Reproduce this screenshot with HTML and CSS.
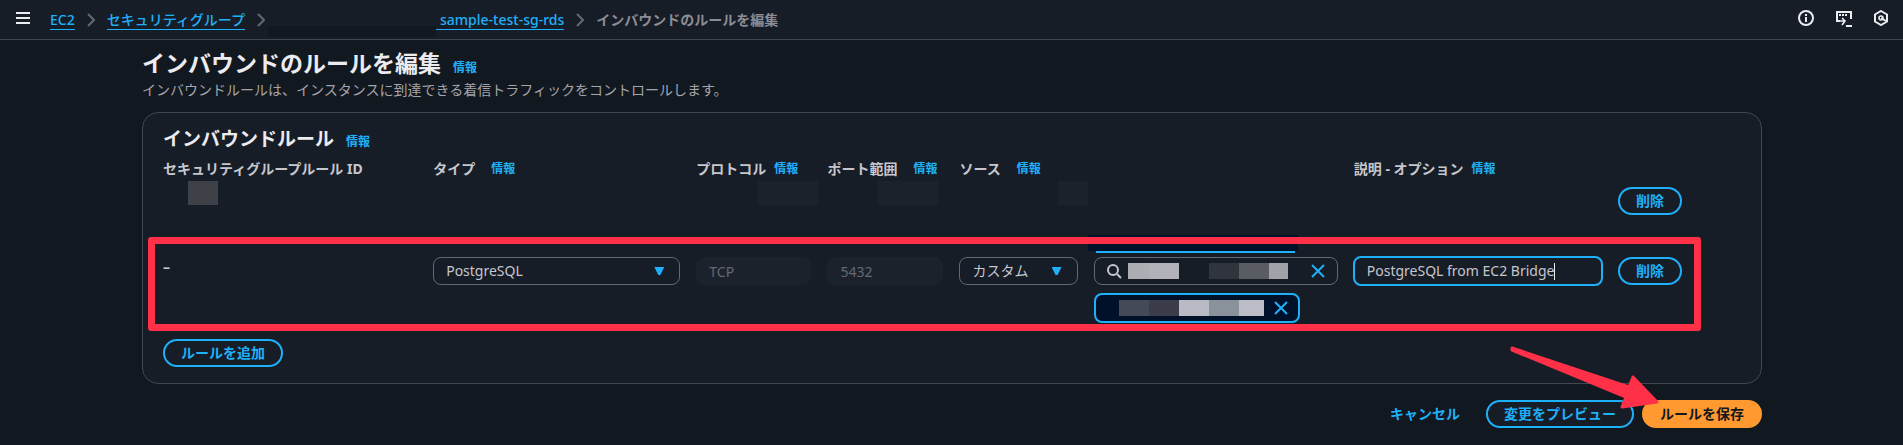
FILE: index.html
```
<!DOCTYPE html>
<html lang="ja">
<head>
  <meta charset="UTF-8">
  <meta name="viewport" content="width=device-width, initial-scale=1.0">
  <title>インバウンドのルールを編集 | EC2</title>
  <link rel="stylesheet" href="styles.css">
</head>
<body>
  <header class="topbar">
    <button class="icon-button" type="button" aria-label="メニュー">
      <svg width="14" height="12" viewBox="0 0 14 12"><path d="M0 1h14M0 6h14M0 11h14" stroke="currentColor" stroke-width="2"/></svg>
    </button>
    <nav class="breadcrumbs" aria-label="パンくずリスト">
      <a href="#">EC2</a>
      <svg class="chevron" width="8" height="14" viewBox="0 0 8 14"><path d="M1 1l6 6-6 6"/></svg>
      <a href="#">セキュリティグループ</a>
      <svg class="chevron" width="8" height="14" viewBox="0 0 8 14"><path d="M1 1l6 6-6 6"/></svg>
      <span class="crumb-mask"></span>
      <a class="crumb-group" href="#">sample-test-sg-rds</a>
      <svg class="chevron" width="8" height="14" viewBox="0 0 8 14"><path d="M1 1l6 6-6 6"/></svg>
      <span class="crumb-current">インバウンドのルールを編集</span>
    </nav>
    <div class="tools">
      <button class="icon-button" type="button" aria-label="ヘルプ">
        <svg width="16" height="16" viewBox="0 0 16 16" fill="none" stroke="currentColor" stroke-width="2"><circle cx="8" cy="8" r="7"/><path d="M8 7v5M8 4v2"/></svg>
      </button>
      <button class="icon-button" type="button" aria-label="CloudShell">
        <svg width="16" height="18" viewBox="0 0 16 18" fill="none" stroke="currentColor" stroke-width="2"><path d="M4 12H1V3h14v7"/><path d="M3 6h2M6 6h2M9 6h2"/><path d="M3 12h6M6 9l3 3-3 4" stroke-width="1.6"/><path d="M10 17h6"/></svg>
      </button>
      <button class="icon-button" type="button" aria-label="アシスタント">
        <svg width="14" height="16" viewBox="0 0 14 16" fill="none" stroke="currentColor" stroke-width="2"><path d="M7 1l6 3.5v7L7 15l-6-3.5v-7z"/><circle cx="7" cy="8" r="2" stroke-width="1.6"/><path d="M7 8l5 3"/></svg>
      </button>
    </div>
  </header>

  <main class="page">
    <h1>インバウンドのルールを編集 <a class="info" href="#">情報</a></h1>
    <p class="lead">インバウンドルールは、インスタンスに到達できる着信トラフィックをコントロールします。</p>

    <form>
      <section class="panel">
        <h2>インバウンドルール <a class="info" href="#">情報</a></h2>

        <div class="rule-grid rule-head">
          <div>セキュリティグループルール ID</div>
          <div class="wide"><label for="type">タイプ</label><a class="info" href="#">情報</a></div>
          <div><label for="protocol">プロトコル</label><a class="info" href="#">情報</a></div>
          <div class="wide"><label for="port">ポート範囲</label><a class="info" href="#">情報</a></div>
          <div class="wide"><label for="source">ソース</label><a class="info" href="#">情報</a></div>
          <div><label for="description">説明 - オプション</label><a class="info" href="#">情報</a></div>
        </div>

        <div class="rule-grid rule-masked">
          <div><span class="mask mask-id"></span></div>
          <div></div>
          <div><span class="mask mask-protocol"></span></div>
          <div><span class="mask mask-port"></span></div>
          <div class="masked-source">
            <span class="mask mask-source"></span>
            <span class="token-end"></span>
          </div>
          <div></div>
          <div class="remove"><button class="button" type="button">削除</button></div>
        </div>

        <div class="rule-grid rule-row">
          <div class="rule-id">–</div>
          <div class="select">
            <select id="type"><option>PostgreSQL</option></select>
          </div>
          <div><input class="field" id="protocol" type="text" value="TCP" disabled></div>
          <div><input class="field" id="port" type="text" value="5432" disabled></div>
          <div class="source">
            <div class="select">
              <select id="source"><option>カスタム</option></select>
            </div>
            <div class="source-values">
              <div class="search">
                <svg width="15" height="15" viewBox="0 0 15 15" fill="none" stroke="currentColor" stroke-width="2"><circle cx="6" cy="6" r="5"/><path d="M10 10l4 4"/></svg>
                <span class="mosaic">
                  <i class="m1"></i><i class="m2"></i><i class="m3"></i><i class="m4"></i><i class="m5"></i><i class="m6"></i>
                </span>
                <input type="text" aria-label="ソースを検索">
                <button class="close" type="button" aria-label="クリア">
                  <svg width="14" height="14" viewBox="0 0 14 14"><path d="M1 1l12 12M13 1L1 13"/></svg>
                </button>
              </div>
              <div class="token">
                <span class="mosaic">
                  <i class="t1"></i><i class="t2"></i><i class="t3"></i><i class="t4"></i><i class="t5"></i>
                </span>
                <button class="close" type="button" aria-label="削除">
                  <svg width="14" height="14" viewBox="0 0 14 14"><path d="M1 1l12 12M13 1L1 13"/></svg>
                </button>
              </div>
            </div>
          </div>
          <div class="description">
            <input id="description" type="text" value="PostgreSQL from EC2 Bridge"><span class="caret"></span>
          </div>
          <div class="remove"><button class="button" type="button">削除</button></div>
          <div class="highlight"></div>
        </div>

        <button class="button" type="button">ルールを追加</button>
      </section>

      <div class="actions">
        <button class="button button-link" type="button">キャンセル</button>
        <button class="button" type="button">変更をプレビュー</button>
        <button class="button button-primary" type="submit">ルールを保存</button>
        <svg class="arrow" width="152" height="66" viewBox="0 0 152 66"><path d="M4 4L121 43L125 33L149 58L114 63L118 53L4 6z"/></svg>
      </div>
    </form>
  </main>
</body>
</html>
```
FILE: styles.css
```
* {
  box-sizing: border-box;
}

body {
  margin: 0;
  background-color: #12181f;
  color: #c6c6cd;
  font-family: "Noto Sans", "Noto Sans CJK JP", sans-serif;
  font-size: 14px;
  line-height: 20px;
}

a {
  color: #1fb0fa;
}

button,
input,
select {
  font: inherit;
  color: inherit;
}

button {
  cursor: pointer;
}

.topbar {
  display: flex;
  align-items: center;
  height: 40px;
  padding: 0 15px 3px 16px;
  background-color: #161d26;
  border-bottom: 1px solid #424650;
}

.icon-button {
  display: flex;
  padding: 0;
  border: none;
  background: none;
  color: #ebebf0;
}

.breadcrumbs {
  display: flex;
  align-items: center;
  gap: 12px;
  margin-left: 20px;
  padding-top: 3px;
}

.breadcrumbs a {
  font-weight: 500;
  line-height: 19px;
  text-decoration: none;
  border-bottom: 1px solid #1fb0fa;
}

.chevron {
  fill: none;
  stroke: #656871;
  stroke-width: 2;
}

.crumb-mask {
  align-self: flex-end;
  width: 168px;
  height: 11px;
  margin: 0 -12px -7px -9px;
  background-color: #12181f;
}

.breadcrumbs .crumb-group {
  padding-left: 4px;
}

.crumb-current {
  color: #8c8c94;
  font-weight: 700;
}

.tools {
  display: flex;
  align-items: center;
  gap: 22px;
  margin-left: auto;
}

.page {
  padding: 8px 141px 16px 142px;
}

h1,
h2 {
  display: flex;
  align-items: baseline;
  gap: 12px;
  margin: 0;
  color: #ebebf0;
  font-weight: 700;
}

h1 {
  font-size: 23px;
  line-height: 30px;
}

h2 {
  font-size: 19px;
  line-height: 24px;
}

.info {
  font-size: 12px;
  font-weight: 700;
  line-height: 16px;
  text-decoration: none;
}

.lead {
  margin: 2px 0 12px;
  color: #a4a4ad;
}

.panel {
  padding: 14px 22px 16px 20px;
  background-color: #161d26;
  border: 1px solid #424650;
  border-radius: 16px;
}

.rule-grid {
  display: grid;
  grid-template-columns:
    minmax(0, 254fr) minmax(0, 247fr) minmax(0, 115fr) minmax(0, 116fr)
    minmax(0, 378fr) minmax(0, 248fr) minmax(0, 121fr);
  column-gap: 16px;
}

.rule-head {
  margin-top: 8px;
  font-weight: 700;
  white-space: nowrap;
}

.rule-head div {
  display: flex;
  align-items: center;
  gap: 8px;
}

.rule-head .wide {
  gap: 16px;
}

.rule-masked {
  height: 74px;
  padding-top: 2px;
}

.mask {
  display: block;
  height: 24px;
  background-color: #1b222b;
}

.mask-id {
  width: 30px;
  margin-left: 25px;
  background-color: #3e4148;
}

.mask-protocol {
  width: 60px;
  margin-left: 62px;
}

.mask-port {
  width: 60px;
  margin-left: 51px;
}

.mask-source {
  width: 30px;
  margin-left: 99px;
}

.masked-source {
  display: flex;
  flex-direction: column;
  justify-content: space-between;
}

/* lower edge of a token scrolled out above the search box */
.token-end {
  width: 210px;
  height: 18px;
  margin-left: 129px;
  padding: 16px 3px 0 8px;
  background: linear-gradient(#001129, #001129) top / 100% 16px no-repeat;
}

.token-end::after {
  content: "";
  display: block;
  height: 2px;
  background-color: #1fb0fa;
}

.rule-masked .remove {
  padding-top: 6px;
}

.rule-row {
  position: relative;
  align-items: start;
  padding-top: 4px;
  margin-bottom: 16px;
}

.rule-id {
  font-weight: 700;
}

.highlight {
  position: absolute;
  top: -16px;
  right: 38px;
  bottom: -8px;
  left: -15px;
  border: 7px solid #ff3048;
  border-radius: 3px;
  pointer-events: none;
}

.select {
  display: grid;
  align-items: center;
}

.select select,
.select::after {
  grid-area: 1 / 1;
}

.select::after {
  content: "";
  justify-self: end;
  width: 10px;
  height: 8px;
  margin-right: 16px;
  background-color: #1fb0fa;
  clip-path: polygon(0 0, 100% 0, 60% 100%, 40% 100%);
  pointer-events: none;
}

.select select,
.field {
  width: 100%;
  height: 28px;
  padding: 0 12px;
  border: 1px solid #656871;
  border-radius: 8px;
  background-color: #161d26;
  appearance: none;
}

.field:disabled {
  border-color: #1b222b;
  background-color: #1b222b;
  color: #656871;
}

.source {
  display: grid;
  grid-template-columns: minmax(0, 118fr) minmax(0, 244fr);
  align-items: start;
  gap: 16px;
}

.search {
  display: flex;
  align-items: center;
  height: 28px;
  padding: 0 12px;
  border: 1px solid #656871;
  border-radius: 8px;
}

.search .mosaic {
  margin-left: 6px;
}

.search input {
  flex: 1;
  width: 0;
  min-width: 0;
  padding: 0;
  border: none;
  background: none;
}

.mosaic {
  display: flex;
  height: 16px;
}

.mosaic i {
  width: 30px;
}

.mosaic .m1 { width: 21px; background-color: #adaeb4; }
.mosaic .m2 { background-color: #b2b3ba; }
.mosaic .m4 { background-color: #30353d; }
.mosaic .m5 { background-color: #5a5c64; }
.mosaic .m6 { width: 19px; background-color: #a1a1aa; }
.mosaic .t1 { background-color: #444a57; }
.mosaic .t2 { background-color: #3a3d49; }
.mosaic .t3 { background-color: #babac5; }
.mosaic .t4 { background-color: #89919b; }
.mosaic .t5 { width: 25px; background-color: #bdbdc8; }

.token {
  display: flex;
  align-items: center;
  justify-content: space-between;
  width: 206px;
  height: 30px;
  margin-top: 8px;
  padding: 0 10px 0 23px;
  border: 2px solid #1fb0fa;
  border-radius: 8px;
  background-color: #001129;
}

.close {
  display: flex;
  padding: 0;
  border: none;
  background: none;
}

.close path {
  stroke: #1fb0fa;
  stroke-width: 2;
}

.description {
  display: flex;
  align-items: center;
  height: 30px;
  margin: -1px;
  padding: 0 12px;
  border: 2px solid #1fb0fa;
  border-radius: 8px;
}

.description input {
  field-sizing: content;
  min-width: 0;
  padding: 0;
  border: none;
  outline: none;
  background: none;
}

.caret {
  width: 1px;
  height: 17px;
  background-color: #ebebf0;
}

.button {
  height: 28px;
  padding: 0 16px;
  border: 2px solid #1fb0fa;
  border-radius: 14px;
  background-color: #161d26;
  color: #1fb0fa;
  font-weight: 700;
  line-height: 22px;
  white-space: nowrap;
}

.button-link {
  border-color: transparent;
  background-color: transparent;
}

.button-primary {
  border-color: #ff9930;
  background-color: #ff9930;
  color: #12181f;
}

.actions {
  position: relative;
  display: flex;
  justify-content: flex-end;
  gap: 8px;
  margin-top: 16px;
}

.arrow {
  position: absolute;
  top: -56px;
  right: 102px;
  fill: #ff3048;
  stroke: #ff3048;
  stroke-width: 3;
  stroke-linejoin: round;
  pointer-events: none;
}
```
